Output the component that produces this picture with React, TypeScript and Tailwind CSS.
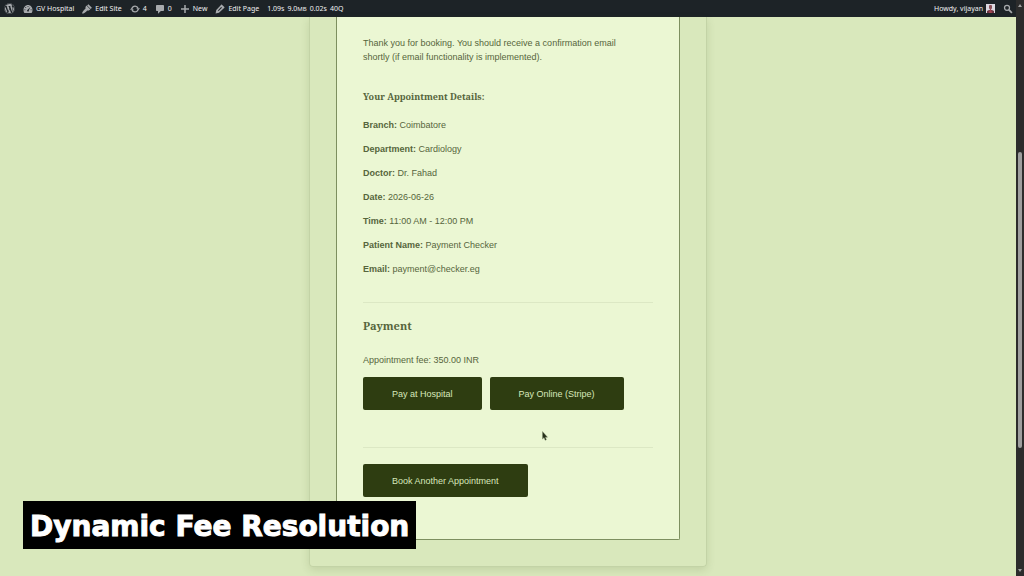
import React from 'react';
import { FaWordpress } from 'react-icons/fa';

const details = [
  { label: 'Branch', value: 'Coimbatore' },
  { label: 'Department', value: 'Cardiology' },
  { label: 'Doctor', value: 'Dr. Fahad' },
  { label: 'Date', value: '2026-06-26' },
  { label: 'Time', value: '11:00 AM - 12:00 PM' },
  { label: 'Patient Name', value: 'Payment Checker' },
  { label: 'Email', value: 'payment@checker.eg' },
];

function Icon({ children }: { children: React.ReactNode }) {
  return (
    <svg viewBox="0 0 20 20" fill="currentColor" aria-hidden="true" className="h-[10px] w-[10px] shrink-0 text-[#a7aaad]">
      {children}
    </svg>
  );
}

function DashboardIcon() {
  return (
    <Icon>
      <path
        fillRule="evenodd"
        d="M2.800 18h14.400c1.200-1.500 1.800-3.800 1.800-6C19 6.500 15 2 10 2s-9 4.500-9 10c0 2.200.6 4.500 1.800 6zM10 4a1 1 0 1 1 0 2 1 1 0 0 1 0-2zM5.500 6a1 1 0 1 1 0 2 1 1 0 0 1 0-2zm9.300.2-3.100 6.300c.5 1.500-.3 2.500-1.700 2.500s-2.300-1.300-1.700-2.500zM3.800 10.500a1 1 0 1 1 0 2 1 1 0 0 1 0-2zm12.400 0a1 1 0 1 1 0 2 1 1 0 0 1 0-2z"
      />
    </Icon>
  );
}

function BrushIcon() {
  return (
    <Icon>
      <path d="M10.200 2.800 12.800.4l7 7-2.400 2.600zM8.800 3.200l8 8c-2 2-4.700 2.400-6.500 1.800-2 2.700-4.900 4.700-7.500 6.100-1.700.8-3-.6-2.200-2.200C1.900 14.300 4.200 11.600 7 9.600c-.5-1.800 0-4.600 1.800-6.400z" />
    </Icon>
  );
}

function UpdateIcon() {
  return (
    <Icon>
      <g fill="none" stroke="currentColor" strokeWidth="2.600">
        <path d="M4.200 8A6.300 6.300 0 0 1 16 8.500" />
        <path d="M15.800 12A6.300 6.300 0 0 1 4 11.500" />
      </g>
      <path d="M12.600 8.500H20L16.300 13zM0 11.500h7.400L3.700 7z" />
    </Icon>
  );
}

function CommentIcon() {
  return (
    <Icon>
      <path d="M4 2h12c1 0 2 .9 2 2v8c0 1.100-1 2-2 2h-4.300L6 19.500V14H4c-1.100 0-2-.9-2-2V4c0-1.100.9-2 2-2z" />
    </Icon>
  );
}

function PlusIcon() {
  return (
    <Icon>
      <path d="M8.500 2h3v6.500H18v3h-6.500V18h-3v-6.500H2v-3h6.500z" />
    </Icon>
  );
}

function PencilIcon() {
  return (
    <Icon>
      <path
        fillRule="evenodd"
        d="m13.900 1.300 4.800 4.800c.5.500.5 1 0 1.500L8 17.700l-6.800 1.200L2.500 12 12.400 1.300c.5-.5 1-.5 1.500 0zM12.300 6l-6.500 6.800 1.400 1.400 6.800-6.500z"
      />
    </Icon>
  );
}

function SearchIcon() {
  return (
    <Icon>
      <g fill="none" stroke="currentColor">
        <circle cx="8" cy="7.500" r="5" strokeWidth="2.500" />
        <path d="m11.500 11.300 6.300 6.300" strokeWidth="3.400" />
      </g>
    </Icon>
  );
}

function AdminBar() {
  return (
    <nav className="flex h-[17px] items-center justify-between bg-[#1d2327] pl-1 pr-[3px] font-['Noto_Sans',sans-serif] text-[7px] leading-[17px] text-[#f0f0f1]">
      <div className="flex items-center">
        <a href="#wordpress" aria-label="About WordPress">
          <FaWordpress className="h-[11px] w-[11px] text-[#a7aaad]" />
        </a>
        <a href="#site" className="ml-2 flex items-center gap-[3px]"><DashboardIcon />GV Hospital</a>
        <a href="#edit-site" className="ml-2 flex items-center gap-[3px]"><BrushIcon />Edit Site</a>
        <a href="#updates" className="ml-2 flex items-center gap-[3px]"><UpdateIcon />4</a>
        <a href="#comments" className="ml-2 flex items-center gap-[3px]"><CommentIcon />0</a>
        <a href="#new" className="ml-2 flex items-center gap-[3px]"><PlusIcon />New</a>
        <a href="#edit-page" className="ml-2 flex items-center gap-[3px]"><PencilIcon />Edit Page</a>
        <a href="#queries" className="ml-2 flex gap-[3px]">
          <span>1.09s</span>
          <span>9.0<span className="text-[6px]">MB</span></span>
          <span>0.02s</span>
          <span>40Q</span>
        </a>
      </div>
      <div className="flex items-center gap-2">
        <a href="#profile" className="flex items-center gap-[3px]">
          Howdy, vijayan
          <svg viewBox="0 0 9 9" className="h-[9px] w-[9px]" aria-hidden="true">
            <rect width="9" height="9" fill="#dcd8e0" />
            <rect x="3" y="1" width="3" height="4" rx="1" fill="#8a5058" />
            <path d="M1 9V7l2-1h3l2 1v2z" fill="#6d3442" />
            <path d="M4 5h1l1 4H3z" fill="#a34552" />
          </svg>
        </a>
        <button type="button" aria-label="Search"><SearchIcon /></button>
      </div>
    </nav>
  );
}

function ActionButton({ children }: { children: React.ReactNode }) {
  return (
    <button type="button" className="h-[33px] rounded-[2px] bg-[#2e3d11] px-[29px] text-[9px] text-[#d8e8ba]">
      {children}
    </button>
  );
}

function Confirmation() {
  return (
    <main className="mx-auto w-full max-w-[398px] rounded-b-[4px] border border-t-0 border-[#c3d3a6] px-[26px] pb-[26px] shadow-[0_3px_8px_rgba(60,80,20,0.14)]">
      <section className="rounded-b-[2px] border border-t-0 border-[#7d8f5f] bg-[#ebf7d3] px-[26px] pb-[42px] pt-[19px] text-[9px] leading-[14px] text-[#56653c]">
        <p>
          Thank you for booking. You should receive a confirmation email
          <br />
          shortly (if email functionality is implemented).
        </p>

        <h4 className="mt-[25px] font-['Noto_Serif','DejaVu_Serif',serif] text-[9px] font-bold leading-4">
          Your Appointment Details:
        </h4>
        <div className="mt-[13px] flex flex-col gap-[10px]">
          {details.map((row) => (
            <p key={row.label}>
              <strong>{row.label}:</strong> {row.value}
            </p>
          ))}
        </div>

        <hr className="mt-[26px] border-[#dce8c4]" />
        <h3 className="mt-[13px] font-['Noto_Serif','DejaVu_Serif',serif] text-[11px] font-bold leading-5">Payment</h3>
        <p className="mt-[17px]">Appointment fee: 350.00 INR</p>
        <div className="mt-[10px] flex flex-wrap gap-2">
          <ActionButton>Pay at Hospital</ActionButton>
          <ActionButton>Pay Online (Stripe)</ActionButton>
        </div>

        <hr className="mb-4 mt-[37px] border-[#dce8c4]" />
        <ActionButton>Book Another Appointment</ActionButton>
      </section>
    </main>
  );
}

function Scrollbar() {
  return (
    <div className="relative w-2 shrink-0 bg-[#2c2c2c]" aria-hidden="true">
      <svg viewBox="0 0 8 6" className="absolute left-0 top-[2px] h-[6px] w-2"><path d="M2 5h4L4 2z" fill="#a0a0a0" /></svg>
      <div className="absolute left-[2px] top-[152px] h-[296px] w-1 rounded-full bg-[#9f9f9f]" />
      <svg viewBox="0 0 8 6" className="absolute bottom-[2px] left-0 h-[6px] w-2"><path d="M2 1h4L4 4z" fill="#a0a0a0" /></svg>
    </div>
  );
}

export default function App() {
  return (
    <div className="relative flex h-screen overflow-hidden bg-[#d9e8bc] font-['Liberation_Sans',Arial,sans-serif]">
      <div className="min-w-0 flex-1">
        <AdminBar />
        <Confirmation />
      </div>
      <Scrollbar />

      {/* Mouse pointer */}
      <svg viewBox="0 0 6 10" className="absolute left-[542px] top-[431px] h-[10px] w-[6px]" aria-hidden="true">
        <path d="M.5.5v7.500l1.500-1.400 1.200 2.700 1.200-.6-1.100-2.500h2.200z" fill="#26301a" stroke="#7f8b6c" strokeWidth=".4" />
      </svg>

      {/* Caption */}
      <div className="absolute bottom-[27px] left-[23px] flex h-12 items-center whitespace-nowrap bg-black px-[7px] pt-1 font-['DejaVu_Sans',sans-serif] text-[28px] font-bold text-white [-webkit-text-stroke:1px_white]">
        Dynamic Fee Resolution
      </div>
    </div>
  );
}
